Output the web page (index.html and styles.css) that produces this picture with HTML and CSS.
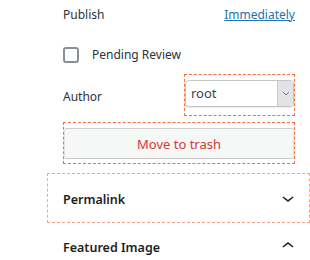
FILE: index.html
```html
<!DOCTYPE html>
<html lang="en">
<head>
    <meta charset="UTF-8">
    <meta name="viewport" content="width=device-width, initial-scale=1.0">
    <title>Post Settings</title>
    <link rel="stylesheet" href="styles.css">
</head>
<body>

<div class="sidebar">
    <div class="panel-body">
        <div class="post-row">
            <span class="row-label">Publish</span>
            <a class="row-link" href="#">Immediately</a>
        </div>

        <div class="check-row">
            <span class="checkbox"></span>
            <span class="row-label">Pending Review</span>
        </div>

        <div class="author-row">
            <span class="row-label author-label">Author</span>
            <div class="outlined select-wrap">
                <div class="select">
                    <span class="select-value">root</span>
                    <span class="select-arrow">
                        <svg width="8" height="5" viewBox="0 0 8 5"><path d="M1 1l3 3 3-3" fill="none" stroke="#787c82" stroke-width="1"/></svg>
                    </span>
                </div>
            </div>
        </div>

        <div class="outlined trash-wrap">
            <button class="trash-button">Move to trash</button>
        </div>
    </div>

    <div class="panel outlined-light">
        <span class="panel-title">Permalink</span>
        <svg class="panel-icon" width="24" height="24" viewBox="0 0 24 24"><path d="M17.5 11.6L12 16l-5.5-4.4.9-1.2L12 14l4.6-3.6 1 1.2z"/></svg>
    </div>

    <div class="panel panel-open">
        <span class="panel-title">Featured Image</span>
        <svg class="panel-icon" width="24" height="24" viewBox="0 0 24 24"><path d="M6.5 12.4L12 8l5.5 4.4-.9 1.2L12 10l-4.6 3.6-1-1.2z"/></svg>
    </div>
</div>

</body>
</html>
```

FILE: styles.css
```css
body {
    font-family: "Noto Sans", Arial, sans-serif;
    font-size: 12px;
    background-color: #fff;
    color: #2c3338;
    margin: 0;
    overflow: hidden;
}

.sidebar {
    margin-left: 47px;
    width: 263px;
}

.panel-body {
    padding: 0 15px 0 16px;
}

.post-row {
    display: flex;
    justify-content: space-between;
    align-items: center;
    height: 28px;
}

.row-link {
    color: #2271b1;
    text-decoration: underline;
}

.check-row {
    display: flex;
    align-items: center;
    margin-top: 18px;
}

.checkbox {
    width: 12px;
    height: 12px;
    border: 2px solid #8a8f96;
    border-radius: 3px;
    margin-right: 13px;
}

.author-row {
    display: flex;
    justify-content: space-between;
    align-items: center;
    margin-top: 11px;
}

.author-label {
    padding-top: 3px;
}

.outlined {
    border: 1px dashed #f7703a;
}

.outlined-light {
    border: 1px dashed #f5a488;
}

.select-wrap {
    width: 109px;
    padding: 5px 0 8px;
}

.select {
    display: flex;
    height: 25px;
    border: 1px solid #c3c4c7;
    border-radius: 4px;
    box-shadow: 0 1px 1px rgba(0, 0, 0, 0.08);
    overflow: hidden;
}

.select-value {
    flex: 1;
    padding-left: 5px;
    font-size: 13px;
    line-height: 24px;
    color: #3c434a;
}

.select-arrow {
    width: 15px;
    display: flex;
    align-items: center;
    justify-content: center;
    background-color: #e2e3e4;
    border-left: 1px solid #c9cacc;
}

.trash-wrap {
    margin-top: 6px;
    padding: 5px 0 4px;
}

.trash-button {
    display: block;
    width: 100%;
    height: 31px;
    font-family: inherit;
    font-size: 13px;
    color: #d63638;
    background-color: #f6f7f7;
    border: 1px solid #e2e2e2;
    border-top-color: #cdcdcd;
    border-bottom-color: #c9c9c9;
    border-radius: 2px;
    cursor: pointer;
}

.panel {
    display: flex;
    justify-content: space-between;
    align-items: center;
    height: 48px;
    width: 230px;
    padding: 0 16px 0 15px;
    margin-top: 9px;
}

.panel-open {
    border: 1px solid transparent;
    margin-top: -2px;
}

.panel-title {
    font-weight: 600;
    font-size: 12.5px;
    color: #1e1e1e;
    padding-top: 2px;
}

.panel-icon {
    fill: #1e1e1e;
    margin-right: -7px;
}
```
